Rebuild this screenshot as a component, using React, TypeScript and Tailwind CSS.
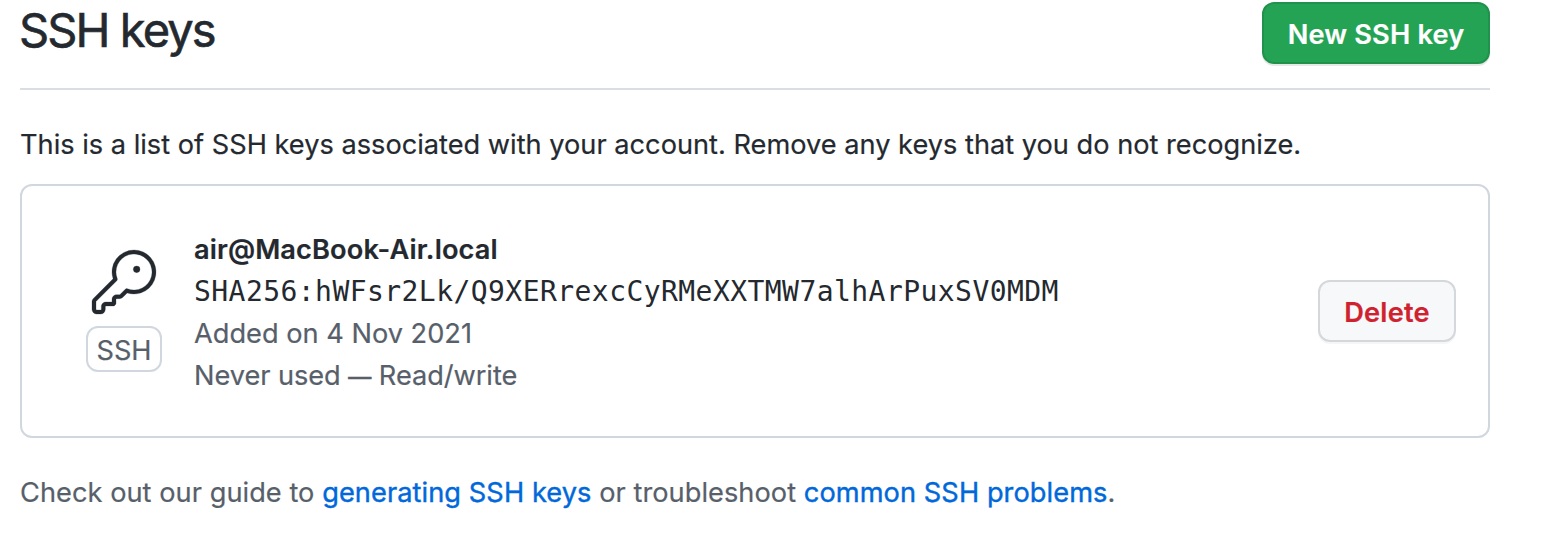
export default function App() {
  return (
    <main className="h-[542px] w-[1542px] overflow-hidden bg-white pl-5 font-['Inter','Liberation_Sans',sans-serif] text-[27.2px] leading-[42px] text-[#24292f] [-webkit-text-stroke:0.2px]">
      <div className="w-[1470px]">
        <header className="flex h-[90px] items-start justify-between border-b-2 border-[#d8dee4]">
          <h1 className="-ml-px text-[47px] leading-[60px] tracking-[-1.9px] [-webkit-text-stroke:0.6px]">SSH keys</h1>
          <button className="mt-[2px] h-[62px] w-[228px] whitespace-nowrap rounded-xl border-2 border-[#20924c] bg-[#24a354] pt-[3px] font-semibold tracking-[0.16px] text-white shadow-[0_2px_0_rgba(27,31,36,0.1)]">New SSH key</button>
        </header>
        <p className="mt-[34px] whitespace-nowrap">This is a list of SSH keys associated with your account. Remove any keys that you do not recognize.</p>
        <section className="mt-[18px] flex h-[254px] items-center rounded-xl border-2 border-[#d0d7de] pr-8">
          <div className="ml-16 flex w-[76px] flex-col items-center">
            <svg width="64" height="64" viewBox="0 0 24 24" fill="#24292f" stroke="#24292f" strokeWidth="0.1" overflow="visible">
              <path d="M16.75 8.5a1.25 1.25 0 1 0 0-2.5 1.25 1.25 0 0 0 0 2.5Z" />
              <path d="M15.75 0a8.25 8.25 0 1 1-2.541 16.101l-1.636 1.636a1.744 1.744 0 0 1-1.237.513H9.25a.25.25 0 0 0-.25.25v1.448a.876.876 0 0 1-.256.619l-.214.213a.75.75 0 0 1-.545.22H5.25a.25.25 0 0 0-.25.25v1A1.75 1.75 0 0 1 3.25 24h-1.5A1.75 1.75 0 0 1 0 22.25v-2.836c0-.464.185-.908.513-1.236l7.386-7.388A8.249 8.249 0 0 1 15.75 0ZM9 8.25a6.733 6.733 0 0 0 .463 2.462.75.75 0 0 1-.168.804l-7.722 7.721a.25.25 0 0 0-.073.177v2.836c0 .138.112.25.25.25h1.5a.25.25 0 0 0 .25-.25v-1c0-.966.784-1.75 1.75-1.75H7.5v-1c0-.966.784-1.75 1.75-1.75h1.086a.25.25 0 0 0 .177-.073l1.971-1.972a.75.75 0 0 1 .804-.168A6.75 6.75 0 1 0 9 8.25Z" />
            </svg>
            <span className="mt-3 flex h-[46px] w-[76px] items-center justify-center rounded-xl border-2 border-[#d0d7de] pt-[3px] text-[#57606a]">SSH</span>
          </div>
          <div className="ml-8 flex-1 pt-1 whitespace-nowrap">
            <div className="font-semibold tracking-[0.12px]">air@MacBook-Air.local</div>
            <div className="h-[42px] font-['DejaVu_Sans_Mono',monospace] text-[28px] tracking-[0.44px] [-webkit-text-stroke:0]">SHA256:hWFsr2Lk/Q9XERrexcCyRMeXXTMW7alhArPuxSV0MDM</div>
            <div className="text-[#57606a]">Added on 4 Nov 2021</div>
            <div className="tracking-[-0.05px] text-[#57606a]">Never used <span className="text-[23px] [-webkit-text-stroke:0.6px]">—</span> Read/write</div>
          </div>
          <button className="h-[62px] w-[138px] rounded-xl border-2 border-[#d5d8da] bg-[#f6f8fa] pt-[3px] font-semibold tracking-[0.2px] text-[#cf222e] shadow-[0_2px_0_rgba(27,31,36,0.04)]">Delete</button>
        </section>
        <p className="mt-[34px] whitespace-nowrap tracking-[0.045px] text-[#57606a]">
          Check out our guide to <a className="text-[#0068da] tracking-[0.08px] [-webkit-text-stroke:0.4px]">generating SSH keys</a> or troubleshoot <a className="text-[#0068da] tracking-[0.08px] [-webkit-text-stroke:0.4px]">common SSH problems</a>.
        </p>
      </div>
    </main>
  );
}
